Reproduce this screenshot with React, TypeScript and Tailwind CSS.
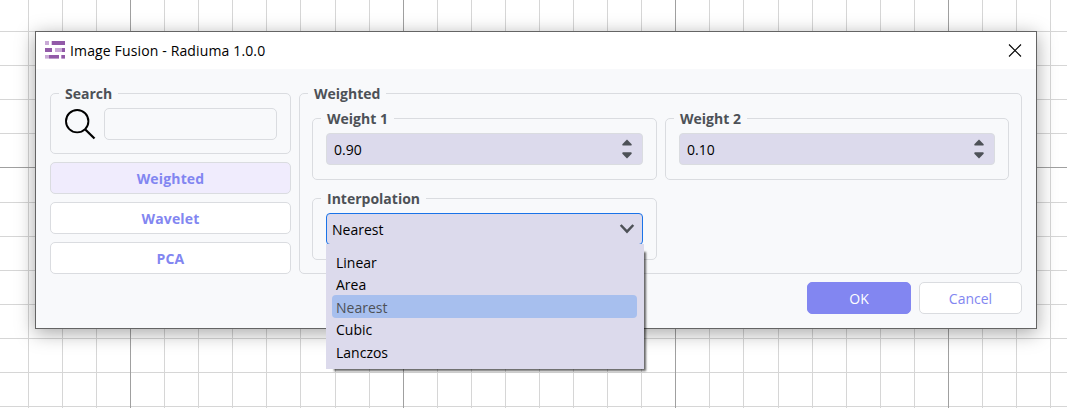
import type { ReactNode } from "react";

const verticals = Array.from({ length: 31 }, (_, i) => ({ at: Math.round(27.8 + i * 34.08), major: i % 8 === 3 }));
const horizontals = Array.from({ length: 12 }, (_, i) => ({ at: Math.round(31 + i * 34.1), major: i % 8 === 4 }));

function GridCanvas() {
  return (
    <svg className="absolute inset-0" width="1067" height="408" shapeRendering="crispEdges">
      {[false, true].map((major) => (
        <g key={String(major)} fill={major ? "#a0a0a0" : "#d6d6d6"}>
          {horizontals.filter((l) => l.major === major).map((l) => (
            <rect key={"h" + l.at} x="0" y={l.at} width="1067" height="1" />
          ))}
          {verticals.filter((l) => l.major === major).map((l) => (
            <rect key={"v" + l.at} x={l.at} y="0" width="1" height="408" />
          ))}
        </g>
      ))}
    </svg>
  );
}

function AppIcon() {
  return (
    <svg width="20" height="19" viewBox="0 0 20 19">
      <g fill="#c9aad6">
        <rect x="0" y="0" width="4" height="4" />
        <rect x="10" y="7" width="7" height="4" />
        <rect x="0" y="14" width="4" height="3.6" />
      </g>
      <g fill="#925aa8">
        <rect x="6.7" y="0" width="13.3" height="4" />
        <rect x="0" y="7" width="7" height="4" />
        <rect x="17" y="7" width="3" height="4" />
        <rect x="4" y="14" width="10" height="3.6" />
        <rect x="16.3" y="14" width="3.7" height="3.6" />
      </g>
    </svg>
  );
}

function GroupBox({ title, className, children }: { title: string; className: string; children?: ReactNode }) {
  return (
    <fieldset className={"min-w-0 rounded-[5px] border border-[#dadce0] " + className}>
      <legend className="ml-[8px] h-[19px] whitespace-nowrap px-[6px] text-[14px] leading-[19px] font-bold text-[#4d5157]">
        {title}
      </legend>
      {children}
    </fieldset>
  );
}

function SpinBox({ value }: { value: string }) {
  return (
    <div className="mx-[13px] mt-[5px] flex h-[32px] items-center justify-between rounded-[4px] border border-[#dadce0] bg-[#dcdaec] pr-[9px] pl-[7px] text-[14px]">
      <span>{value}</span>
      <svg width="12" height="20" viewBox="0 0 12 20" fill="#4d5157">
        <path d="M6 0.6 L10.7 5.2 Q11 6.5 10 6.5 H2 Q1 6.5 1.3 5.2Z" />
        <path d="M6 19.4 L10.7 14.8 Q11 13.3 10 13.3 H2 Q1 13.3 1.3 14.8Z" />
      </svg>
    </div>
  );
}

const buttonBase = "flex h-[32px] items-center justify-center rounded-[5px] border text-[14px] ";
const methods = ["Weighted", "Wavelet", "PCA"];
const options = ["Linear", "Area", "Nearest", "Cubic", "Lanczos"];

export default function App() {
  return (
    <div className="relative h-[408px] w-[1067px] overflow-hidden bg-white pt-[31px] pl-[35px] font-['Open_Sans','Noto_Sans',sans-serif] text-black">
      <GridCanvas />
      <div className="relative flex h-[298px] w-[1002px] flex-col border border-[#646464] bg-[#f8f9fb] shadow-[0_4px_18px_rgba(0,0,0,0.35)]">
        <header className="flex h-[37px] shrink-0 items-center bg-white pr-[14px] pl-[9px]">
          <AppIcon />
          <h1 className="ml-[5px] grow text-[14px] tracking-[0.14px]">Image Fusion - Radiuma 1.0.0</h1>
          <svg width="14" height="14" viewBox="0 0 14 14" stroke="#000" strokeWidth="1.1">
            <path d="M1 0.5 L13 12.5 M13 0.5 L1 12.5" />
          </svg>
        </header>

        <main className="flex gap-[8px] pt-[15px] pl-[14px]">
          <aside className="flex w-[241px] flex-col gap-[8px]">
            <GroupBox title="Search" className="h-[70px]">
              <div className="mt-[5px] ml-[14px] flex gap-[8px]">
                <svg className="mt-px" width="31" height="31" viewBox="0 0 31 31" fill="none" stroke="#000">
                  <circle cx="12.2" cy="12.2" r="11.2" strokeWidth="1.9" />
                  <path d="M20.3 20.5 L29.5 29.5" strokeWidth="2.3" />
                </svg>
                <div className="h-[32px] w-[173px] rounded-[5px] border border-[#dadce0]" />
              </div>
            </GroupBox>
            {methods.map((name, i) => (
              <button
                key={name}
                className={buttonBase + "border-[#dadce0] font-bold tracking-[0.15px] text-[#8286f1] " + (i === 0 ? "bg-[#f0ecfd]" : "bg-white")}
              >
                {name}
              </button>
            ))}
          </aside>

          <GroupBox title="Weighted" className="h-[190px] w-[723px]">
            <div className="mt-[6px] ml-[12px] flex gap-[8px]">
              <GroupBox title="Weight 1" className="h-[71px] w-[345px]">
                <SpinBox value="0.90" />
              </GroupBox>
              <GroupBox title="Weight 2" className="h-[71px] w-[344px]">
                <SpinBox value="0.10" />
              </GroupBox>
            </div>
            <GroupBox title="Interpolation" className="mt-[9px] ml-[12px] h-[71px] w-[345px]">
              <div className="relative mx-[13px] mt-[5px]">
                <div className="flex h-[32px] items-center justify-between rounded-[4px] border border-[#1a73e8] bg-[#dcdaec] pr-[7px] pl-[5px] text-[14px]">
                  <span>Nearest</span>
                  <svg width="16" height="12" viewBox="0 0 16 12" fill="none" stroke="#4d5157" strokeWidth="2.5">
                    <path d="M1.7 2 L8 8.6 L14.3 2" />
                  </svg>
                </div>
                <ul className="absolute top-[31px] left-0 z-10 h-[125px] w-[318px] bg-[#dcdaec] px-[6px] pt-[6.4px] text-[14px] shadow-[5px_5px_2px_-3px_rgba(0,0,0,0.6)]">
                  {options.map((name) => (
                    <li
                      key={name}
                      className={
                        "flex h-[22.5px] w-[305px] items-center rounded-[4px] pt-[1.6px] pl-[4px] " +
                        (name === "Nearest" ? "bg-[#a7bfee] text-[#4d5157]" : "")
                      }
                    >
                      {name}
                    </li>
                  ))}
                </ul>
              </div>
            </GroupBox>
          </GroupBox>
        </main>

        <footer className="mt-[8px] flex justify-end gap-[8px] pr-[14px]">
          <button className={buttonBase + "w-[104px] border-[#8286f1] bg-[#8286f1] text-white"}>OK</button>
          <button className={buttonBase + "w-[103px] border-[#dadce0] bg-white text-[#8286f1]"}>Cancel</button>
        </footer>
      </div>
    </div>
  );
}
